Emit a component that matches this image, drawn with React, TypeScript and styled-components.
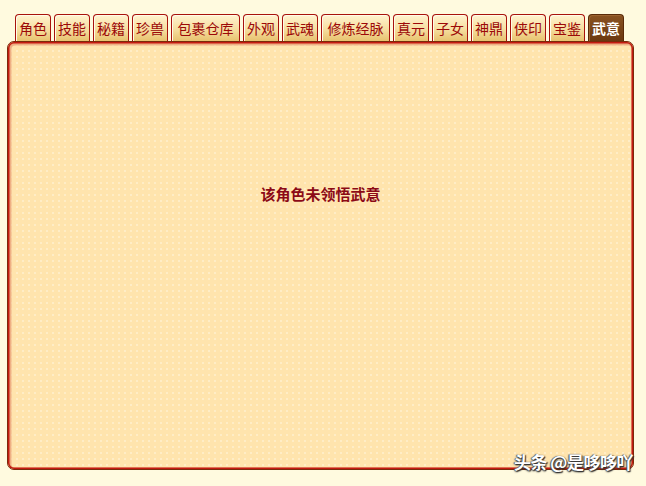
import React from "react";
import styled, { createGlobalStyle } from "styled-components";

const Global = createGlobalStyle`
  html, body { margin: 0; padding: 0; background: #fffadf; }
  body { font-family: "Noto Sans CJK SC", "Noto Sans", sans-serif; }
`;

const Page = styled.div`
  position: relative;
  width: 646px;
  height: 486px;
  padding: 14px 0 0 7px;
  box-sizing: border-box;
  background: #fffadf;
`;

const TabBar = styled.div`
  display: flex;
  gap: 3px;
  padding-left: 8px;
  height: 27px;
  align-items: flex-end;
`;

const Tab = styled.div<{ $wide?: boolean; $active?: boolean }>`
  box-sizing: border-box;
  height: 27px;
  padding: 0 ${(p) => (p.$wide ? "5.5px" : "3px")};
  border: 1px solid ${(p) => (p.$active ? "#5a2a08" : "#a8120c")};
  border-bottom: none;
  border-radius: 4px 4px 0 0;
  background: ${(p) =>
    p.$active
      ? "linear-gradient(#8a5222, #6b3810)"
      : "linear-gradient(#fff3cf 0%, #f6dea0 55%, #e7c26e 100%)"};
  box-shadow: inset 1px 1px 0 ${(p) => (p.$active ? "#9c6330" : "#fffbe8")};
  color: ${(p) => (p.$active ? "#ffffff" : "#9c0808")};
  font-size: 14px;
  font-weight: ${(p) => (p.$active ? 700 : 400)};
  line-height: 27px;
  white-space: nowrap;
`;

const Panel = styled.div`
  box-sizing: border-box;
  width: 627px;
  height: 429px;
  border: 1px solid #7a2a0a;
  border-radius: 7px;
  box-shadow: inset 0 0 0 1.5px #c41a10, inset 1px 1px 0 2.5px #eeb084;
  background-color: #ffe4ad;
  background-image: radial-gradient(circle, #ffedc6 0.8px, transparent 1.2px);
  background-size: 6px 6px;
  display: flex;
  justify-content: center;
  padding-top: 142px;
`;

const Message = styled.div`
  color: #8c0a16;
  font-size: 15px;
  font-weight: 700;
  height: 20px;
  line-height: 20px;
`;

const Watermark = styled.div`
  position: absolute;
  right: 13px;
  bottom: 14px;
  color: #ffffff;
  font-size: 17px;
  font-weight: 700;
  letter-spacing: -0.5px;
  line-height: 20px;
  text-shadow: 1px 1px 1px #333, -1px 0 1px #555, 0 1px 2px #222;
`;

const tabs = [
  "角色",
  "技能",
  "秘籍",
  "珍兽",
  "包裹仓库",
  "外观",
  "武魂",
  "修炼经脉",
  "真元",
  "子女",
  "神鼎",
  "侠印",
  "宝鉴",
  "武意",
];

export default function App() {
  return (
    <Page>
      <Global />
      <TabBar>
        {tabs.map((t) => (
          <Tab key={t} $wide={t.length > 2} $active={t === "武意"}>
            {t}
          </Tab>
        ))}
      </TabBar>
      <Panel>
        <Message>该角色未领悟武意</Message>
      </Panel>
      <Watermark>头条 @是哆哆吖</Watermark>
    </Page>
  );
}
